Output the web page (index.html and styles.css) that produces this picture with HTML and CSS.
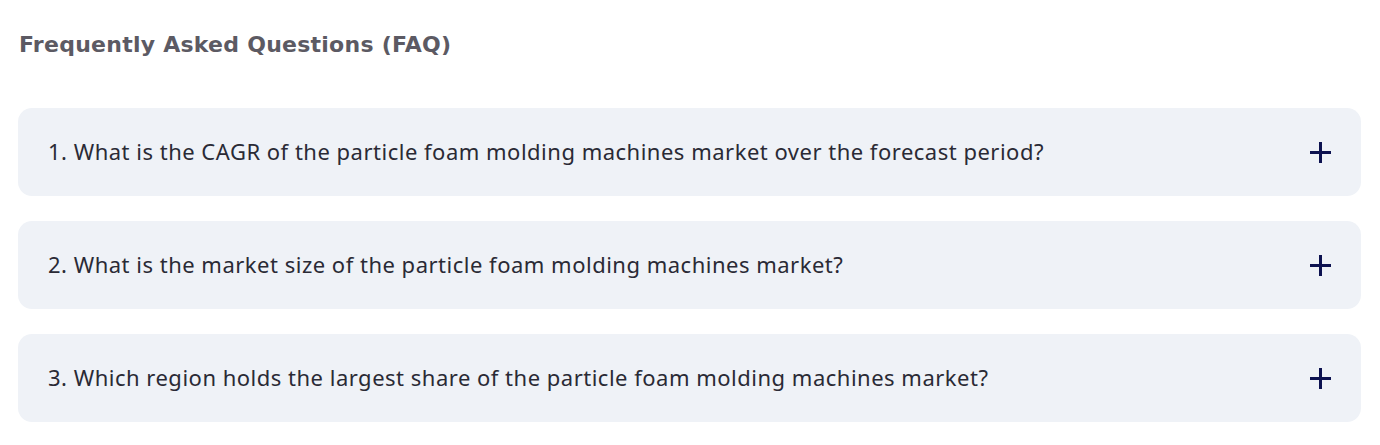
FILE: index.html
```html
<!DOCTYPE html>
<html>
<head>
<meta charset="utf-8">
<link rel="stylesheet" href="styles.css">
</head>
<body>
<section class="faq">
  <h2 class="faq-title">Frequently Asked Questions (FAQ)</h2>
  <div class="faq-list">
    <div class="faq-item">
      <span class="faq-q">1. What is the CAGR of the particle foam molding machines market over the forecast period?</span>
      <svg class="faq-icon" width="21" height="21" viewBox="0 0 21 21"><path d="M10.5 0V21M0 10.5H21" stroke="#0d1250" stroke-width="3"/></svg>
    </div>
    <div class="faq-item">
      <span class="faq-q">2. What is the market size of the particle foam molding machines market?</span>
      <svg class="faq-icon" width="21" height="21" viewBox="0 0 21 21"><path d="M10.5 0V21M0 10.5H21" stroke="#0d1250" stroke-width="3"/></svg>
    </div>
    <div class="faq-item">
      <span class="faq-q">3. Which region holds the largest share of the particle foam molding machines market?</span>
      <svg class="faq-icon" width="21" height="21" viewBox="0 0 21 21"><path d="M10.5 0V21M0 10.5H21" stroke="#0d1250" stroke-width="3"/></svg>
    </div>
  </div>
</section>
</body>
</html>
```

FILE: styles.css
```css
html, body {
  margin: 0;
  padding: 0;
  background: #ffffff;
}
.faq {
  padding: 30px 19px 0 18px;
}
.faq-title {
  margin: 0 0 0 1px;
  font-family: "DejaVu Sans", "Noto Sans", sans-serif;
  font-weight: 700;
  font-size: 22px;
  letter-spacing: 0.25px;
  line-height: 30px;
  color: #5c5a63;
}
.faq-list {
  margin-top: 48px;
  display: flex;
  flex-direction: column;
  gap: 25px;
}
.faq-item {
  display: flex;
  align-items: center;
  justify-content: space-between;
  height: 88px;
  padding: 0 30px 0 30px;
  background: #eff2f7;
  border-radius: 14px;
  box-sizing: border-box;
}
.faq-q {
  font-family: "Noto Sans", sans-serif;
  font-size: 22px;
  letter-spacing: 0.5px;
  padding-bottom: 3px;
  color: #2a2a35;
}
.faq-icon {
  display: block;
  flex: none;
}
```
